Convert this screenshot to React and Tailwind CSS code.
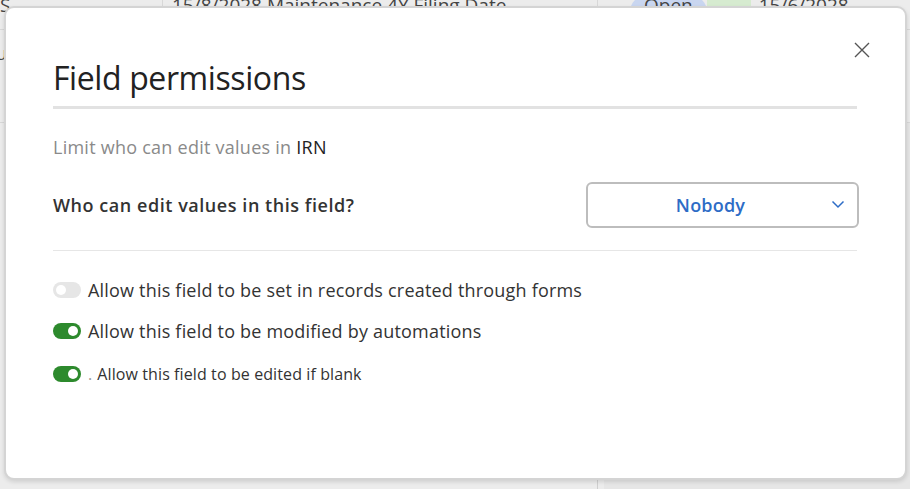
import React from "react";

const Toggle = ({ on }) => (
  <span
    className={`relative inline-flex h-[16px] w-[28px] shrink-0 items-center rounded-full ${
      on ? "bg-[#2d8a2d]" : "bg-[#e6e6e6]"
    }`}
  >
    <span
      className={`absolute top-[3px] h-[10px] w-[10px] rounded-full bg-white ${
        on ? "left-[15px]" : "left-[3px]"
      }`}
    />
  </span>
);

const App = () => {
  return (
    <div
      className="relative h-[489px] w-[910px] overflow-hidden bg-[#ececec]"
      style={{ fontFamily: '"Open Sans", "Noto Sans", sans-serif' }}
    >
      {/* table behind the dialog */}
      <div className="flex h-[30px] border-b border-[#d8d8d8] text-[19px] leading-[20px] text-[#444]">
        <div className="w-[163px] border-r border-[#d8d8d8] -mt-[5px]">S</div>
        <div className="w-[435px] border-r border-[#d8d8d8] pl-[9px] -mt-[5px]">15/8/2028 Maintenance 4Y Filing Date</div>
        <div className="flex flex-1 -mt-[5px]">
          <span className="ml-[32px] rounded-full bg-[#c9d6f0] px-[14px]">Open</span>
          <span className="w-[44px] bg-[#d6ebd0]" />
          <span className="ml-[8px]">15/6/2028</span>
        </div>
      </div>
      <div className="flex h-[93px] border-b border-[#d8d8d8] text-[18px] text-[#444]">
        <div className="w-[163px] border-r border-[#d8d8d8] pt-[10px] -ml-[4px]">u</div>
        <div className="w-[435px] border-r border-[#d8d8d8]" />
      </div>
      <div className="flex h-[366px]">
        <div className="w-[598px] border-r border-[#cfcfcf]" />
        <div className="ml-[6px] flex-1 bg-[#e6e6e6]" />
      </div>

      {/* dialog */}
      <div className="absolute left-[4px] top-[6px] h-[474px] w-[903px] rounded-[10px] border-2 border-[#d4d4d4] bg-white shadow-[0_2px_4px_rgba(0,0,0,0.12)]">
        <button className="absolute right-[34px] top-[33px] text-[#555]">
          <svg width="18" height="18" viewBox="0 0 18 18" fill="none" stroke="currentColor" strokeWidth="1.4">
            <path d="M2 2L16 16M16 2L2 16" />
          </svg>
        </button>

        <div className="px-[47px] pt-[50px]">
          <h1 className="text-[32px] font-normal leading-[40px] tracking-[-0.4px] text-[#222]">Field permissions</h1>
          <div className="mt-[8px] h-[3px] w-[804px] bg-[#e2e2e2]" />

          <p className="mt-[26px] text-[18px] leading-[24px] tracking-[0.25px] text-[#8a8a8a]">
            Limit who can edit values in <span className="text-[#222]">IRN</span>
          </p>

          <div className="mt-[23px] flex w-[806px] items-center justify-between">
            <span className="text-[18px] font-semibold tracking-[0.55px] text-[#333]">Who can edit values in this field?</span>
            <div className="relative flex h-[46px] w-[273px] items-center justify-center rounded-[6px] border-2 border-[#bdbdbd] bg-white pr-[24px]">
              <span className="text-[18px] font-semibold tracking-[0.2px] text-[#2d6cc6]">Nobody</span>
              <svg className="absolute right-[12px] top-[15px]" width="14" height="10" viewBox="0 0 14 10" fill="none" stroke="#2d6cc6" strokeWidth="1.5">
                <path d="M1.5 2.5L7 8L12.5 2.5" />
              </svg>
            </div>
          </div>

          <div className="mt-[22px] h-px w-[804px] bg-[#e6e6e6]" />

          <div className="mt-[27px] flex flex-col text-[18px] tracking-[0.2px] text-[#333]">
            <label className="flex h-[24px] items-center gap-[7px]">
              <Toggle on={false} />
              <span>Allow this field to be set in records created through forms</span>
            </label>
            <label className="mt-[17px] flex h-[24px] items-center gap-[7px]">
              <Toggle on />
              <span>Allow this field to be modified by automations</span>
            </label>
            <label className="mt-[19px] flex h-[24px] items-center gap-[7px]">
              <Toggle on />
              <span className="text-[16px] tracking-[0.1px] text-[#333]">
                <span className="mr-[5px] text-[#999]">.</span>Allow this field to be edited if blank
              </span>
            </label>
          </div>
        </div>
      </div>
    </div>
  );
};

export default App;
